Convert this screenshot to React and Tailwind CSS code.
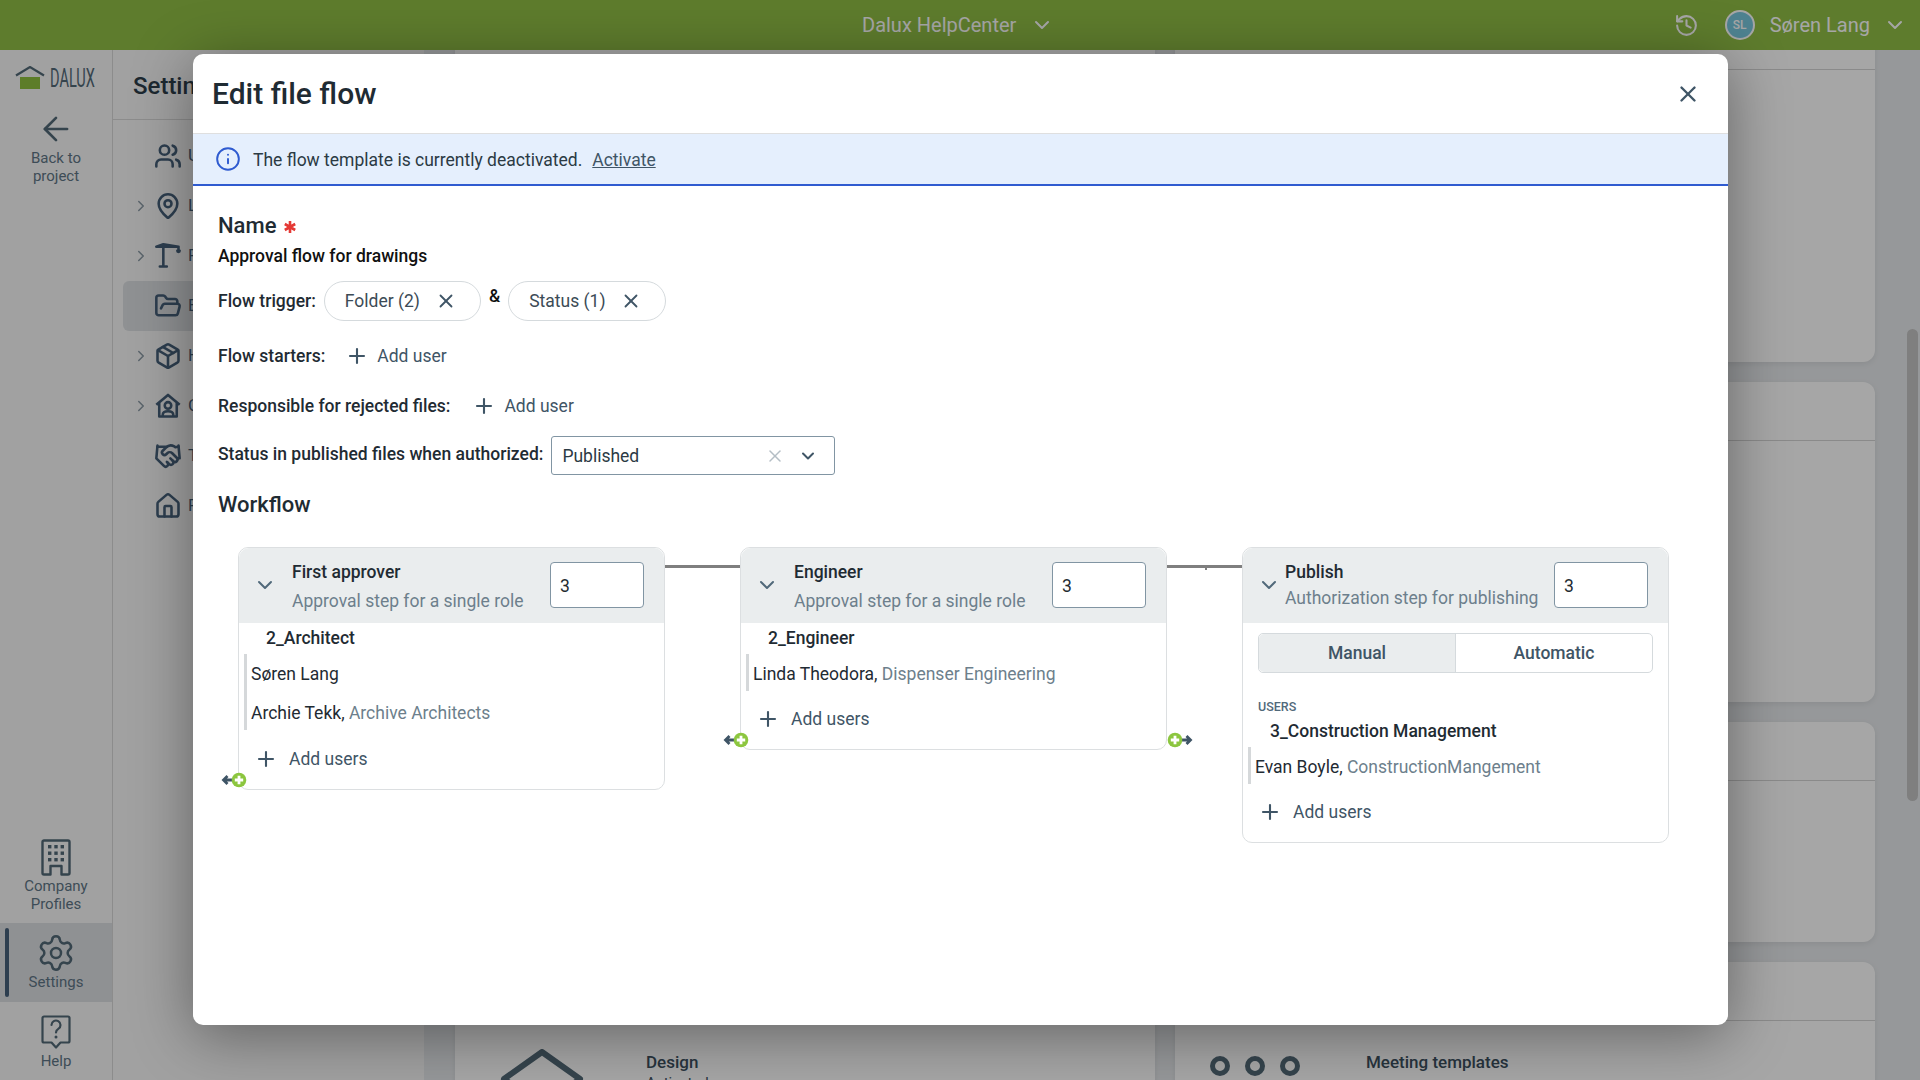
import React from "react";
import {
  ArrowLeft,
  ChevronDown,
  ChevronRight,
  FolderOpen,
  Handshake,
  History,
  House,
  Info,
  MapPin,
  Package,
  Plus,
  Settings,
  Users,
  X,
} from "lucide-react";

const sideItems = [
  { label: "Users", icon: Users },
  { label: "Locations", icon: MapPin, chevron: true },
  { label: "Project", icon: CraneIcon, chevron: true },
  { label: "Explorer", icon: FolderOpen, active: true },
  { label: "Handover", icon: Package, chevron: true },
  { label: "Company", icon: HomeUserIcon, chevron: true },
  { label: "Third party", icon: Handshake },
  { label: "Project", icon: House },
];

const steps = [
  {
    title: "First approver",
    subtitle: "Approval step for a single role",
    group: "2_Architect",
    users: [
      { name: "Søren Lang" },
      { name: "Archie Tekk", company: "Archive Architects" },
    ],
    leftAdd: true,
  },
  {
    title: "Engineer",
    subtitle: "Approval step for a single role",
    group: "2_Engineer",
    users: [{ name: "Linda Theodora", company: "Dispenser Engineering" }],
    leftAdd: true,
    rightAdd: true,
  },
  {
    title: "Publish",
    subtitle: "Authorization step for publishing",
    group: "3_Construction Management",
    users: [{ name: "Evan Boyle", company: "ConstructionMangement" }],
    publish: true,
  },
];

function CraneIcon(props) {
  return (
    <svg viewBox="0 0 24 24" fill="none" stroke="currentColor" strokeWidth="2" strokeLinecap="round" {...props}>
      <path d="M2 4h19M8 4v17M5 21h6M8 2 2 4M8 2l13 2M21 4v3" />
      <path d="M20 7.500a1 1 0 0 0 2 0" />
    </svg>
  );
}

function HomeUserIcon(props) {
  return (
    <svg viewBox="0 0 24 24" fill="none" stroke="currentColor" strokeWidth="2.200" strokeLinejoin="round" {...props}>
      <path d="M2 11 12 2.500 22 11M4.500 9v12h15V9" />
      <circle cx="12" cy="11.500" r="2.800" />
      <path d="M7.500 21v-1.500c0-2 2-3 4.500-3s4.500 1 4.500 3V21" />
    </svg>
  );
}

function BuildingIcon(props) {
  return (
    <svg viewBox="0 0 30 37" fill="none" {...props}>
      <path d="M9.500 35.500H3a1.500 1.500 0 0 1-1.500-1.500V3A1.500 1.500 0 0 1 3 1.500h24A1.500 1.500 0 0 1 28.500 3v31a1.500 1.500 0 0 1-1.500 1.500h-6.500V27h-11z" stroke="currentColor" strokeWidth="2.400" strokeLinejoin="round" />
      <g fill="currentColor">
        <rect x="7" y="6" width="3.400" height="3.400" />
        <rect x="13.300" y="6" width="3.400" height="3.400" />
        <rect x="19.600" y="6" width="3.400" height="3.400" />
        <rect x="7" y="12.500" width="3.400" height="3.400" />
        <rect x="13.300" y="12.500" width="3.400" height="3.400" />
        <rect x="19.600" y="12.500" width="3.400" height="3.400" />
        <rect x="7" y="19" width="3.400" height="3.400" />
        <rect x="13.300" y="19" width="3.400" height="3.400" />
        <rect x="19.600" y="19" width="3.400" height="3.400" />
      </g>
    </svg>
  );
}

function HelpIcon(props) {
  return (
    <svg viewBox="0 0 30 34" fill="none" {...props}>
      <path d="M3 1.500h24A1.500 1.500 0 0 1 28.500 3v23a1.500 1.500 0 0 1-1.500 1.500h-7.500L15 32.500l-4.500-5H3A1.500 1.500 0 0 1 1.500 26V3A1.500 1.500 0 0 1 3 1.500z" stroke="currentColor" strokeWidth="2.200" strokeLinejoin="round" />
      <path d="M10.500 10a4.500 4.500 0 1 1 6.800 3.900c-1.500.9-2.300 1.800-2.300 3.600" stroke="currentColor" strokeWidth="2.200" strokeLinecap="round" />
      <circle cx="15" cy="22" r="1.500" fill="currentColor" />
    </svg>
  );
}

function DaluxLogo() {
  return (
    <div className="flex items-center h-6">
      <svg viewBox="0 0 30 24" className="w-[30px] h-6 shrink-0">
        <path d="M1 9.500 15 1l14 8.500" fill="none" stroke="#526977" strokeWidth="2.200" />
        <rect x="5" y="11" width="20" height="12" fill="#8fc03f" />
      </svg>
      <span className="ml-[5px] text-[26px] leading-6 text-[#526977] inline-block w-[47px] origin-left scale-x-[0.56]">
        DALUX
      </span>
    </div>
  );
}

function RailItem({ icon, label, active }) {
  return (
    <div
      className={`relative flex flex-col items-center text-center text-[15px] leading-[18px] text-[#5f7686] ${
        active ? "bg-[#dcdfe2]" : ""
      }`}
    >
      {active && (
        <div className="absolute left-[5px] top-[5px] bottom-[5px] w-[4px] rounded-full bg-[#45607a]" />
      )}
      {icon}
      {label}
    </div>
  );
}

function Rail() {
  return (
    <aside className="w-[113px] shrink-0 border-r border-[#d7d7d7] bg-[#f7f7f7] flex flex-col justify-between">
      <div className="flex flex-col items-center">
        <div className="mt-[16px]">
          <DaluxLogo />
        </div>
        <ArrowLeft className="mt-[20px] w-[38px] h-[38px] text-[#526977]" strokeWidth={1.7} />
        <div className="mt-[1px] text-center text-[15px] leading-[18px] text-[#5f7686]">
          Back to
          <br />
          project
        </div>
      </div>
      <div>
        <div className="h-[88px] pt-[4px]">
          <RailItem
            icon={<BuildingIcon className="w-[30px] h-[37px] text-[#526977]" />}
            label={
              <div className="mt-[1px]">
                Company
                <br />
                Profiles
              </div>
            }
          />
        </div>
        <div className="h-[79px]">
          <RailItem
            active
            icon={
              <div className="h-[79px] pt-[10px] flex flex-col items-center">
                <Settings className="w-[40px] h-[40px] text-[#526977]" strokeWidth={1.5} />
                <div>Settings</div>
              </div>
            }
          />
        </div>
        <div className="h-[78px] pt-[13px]">
          <RailItem
            icon={<HelpIcon className="w-[30px] h-[34px] text-[#526977]" />}
            label={<div className="mt-[3px]">Help</div>}
          />
        </div>
      </div>
    </aside>
  );
}

function SettingsNav() {
  return (
    <nav className="w-[311px] shrink-0 bg-[#f7f7f7]">
      <div className="h-[70px] flex items-center pl-[20px] pt-[2px] border-b border-[#d7d7d7] text-[24px] font-medium text-[#2d3e4b]">
        Settings
      </div>
      <div className="mt-[11px] ml-[10px] mr-[10px]">
        {sideItems.map((item, i) => {
          const Icon = item.icon;
          return (
            <div
              key={i}
              className={`h-[50px] flex items-center rounded-md text-[17px] text-[#45607a] ${
                item.active ? "bg-[#dcdfe2]" : ""
              }`}
            >
              <div className="w-[28px] pl-[9px] shrink-0">
                {item.chevron && <ChevronRight className="w-[18px] h-[18px] text-[#8b9aa5]" strokeWidth={2} />}
              </div>
              <Icon className="w-[28px] h-[28px] ml-[3px] shrink-0" strokeWidth={2.2} />
              <span className="ml-[6px]">{item.label}</span>
            </div>
          );
        })}
      </div>
    </nav>
  );
}

function BgCard({ className, children }) {
  return (
    <div className={`rounded-[12px] bg-white shadow-[0_2px_6px_rgba(0,0,0,0.08)] ${className}`}>
      <div className="h-[59px] border-b border-[#d5d5d5]" />
      {children}
    </div>
  );
}

function Background() {
  return (
    <main className="flex-1 overflow-hidden bg-[#e7eaed] relative">
      <div className="-mt-[39px] pl-[31px] pr-[45px] grid grid-cols-[700px_700px] gap-x-5 gap-y-5">
        <BgCard className="h-[351px]" />
        <BgCard className="h-[351px]" />
        <BgCard className="h-[320px]" />
        <BgCard className="h-[320px]" />
        <BgCard className="h-[220px]" />
        <BgCard className="h-[220px]" />
        <BgCard className="h-[240px]">
          <div className="flex pt-[29px]">
            <svg viewBox="0 0 84 84" className="ml-[45px] -mt-[1px] w-[84px] h-[84px] shrink-0" fill="none" stroke="#526977" strokeWidth="6" strokeLinejoin="round">
              <path d="M42 3 80 30 42 57 4 30z" />
            </svg>
            <div className="ml-[62px] text-[17px] leading-6 font-medium text-[#3c5060]">
              Design
              <div className="-mt-[3px] font-normal text-[15px]">Activated</div>
            </div>
          </div>
        </BgCard>
        <BgCard className="h-[240px]">
          <div className="flex pt-[29px]">
            <div className="ml-[35px] mt-[6px] flex gap-[15px] h-5">
              <div className="w-5 h-5 rounded-full border-[5px] border-[#526977]" />
              <div className="w-5 h-5 rounded-full border-[5px] border-[#526977]" />
              <div className="w-5 h-5 rounded-full border-[5px] border-[#526977]" />
            </div>
            <div className="ml-[66px] text-[17px] leading-6 font-medium text-[#3c5060]">Meeting templates</div>
          </div>
        </BgCard>
      </div>
      <div className="absolute right-[2px] top-[279px] h-[472px] w-[11px] rounded-full bg-[#c3c3c3]" />
    </main>
  );
}

function TopBar() {
  return (
    <header className="relative h-[50px] shrink-0 bg-[#91bf45] flex items-center justify-end text-white">
      <div className="absolute left-[862px] top-0 h-[50px] flex items-center text-[20px]">
        Dalux HelpCenter
        <ChevronDown className="ml-[14px] w-[24px] h-[24px]" strokeWidth={2} />
      </div>
      <History className="w-[25px] h-[25px] mr-[26px]" strokeWidth={2} />
      <div className="w-[30px] h-[30px] rounded-full border-2 border-white bg-[#79c8dd] flex items-center justify-center text-[12px] font-medium">
        SL
      </div>
      <span className="ml-[15px] text-[20px]">Søren Lang</span>
      <ChevronDown className="ml-[13px] mr-[13px] w-[24px] h-[24px]" strokeWidth={2} />
    </header>
  );
}

function Chip({ label }) {
  return (
    <div className="h-10 rounded-full border border-[#d5dadd] flex items-center pl-[20px] pr-[23px] text-[#3c4b56]">
      {label}
      <X className="ml-[15px] w-[22px] h-[22px] text-[#3f5566]" strokeWidth={2} />
    </div>
  );
}

function AddLink({ label, className = "" }) {
  return (
    <div className={`flex items-center text-[#3f5566] ${className}`}>
      <Plus className="w-[24px] h-[24px]" strokeWidth={2.1} />
      <span className="ml-[8px]">{label}</span>
    </div>
  );
}

function FlowAdd({ direction, className }) {
  const left = direction === "left";
  return (
    <svg viewBox="0 0 26 16" className={`absolute w-[26px] h-[16px] ${className}`}>
      <g transform={left ? "" : "translate(26,0) scale(-1,1)"}>
        <path d="M11 8H2.500M6.500 4 2.500 8 6.500 12" fill="none" stroke="#3f5566" strokeWidth="2.800" />
        <circle cx="18" cy="8" r="7.300" fill="#8cc63f" />
        <path d="M18 3.800v8.400M13.800 8h8.400" stroke="#fff" strokeWidth="2.800" />
      </g>
    </svg>
  );
}

function RequiredMark() {
  return (
    <svg viewBox="0 0 12 12" className="ml-[8px] mt-[4px] w-[12px] h-[12px]" stroke="#e53935" strokeWidth="2.600">
      <path d="M6 0v12M.8 3l10.400 6M.8 9l10.400-6" />
    </svg>
  );
}

function StepCard({ step }) {
  const single = step.users.length === 1;
  return (
    <div className="relative w-[427px] shrink-0 rounded-[10px] border border-[#dcdfe1] bg-white">
      <div className="h-[75px] rounded-t-[10px] bg-[#eaedee] flex pr-[20px]">
        <ChevronDown className="ml-[14px] mt-[25px] w-[24px] h-[24px] shrink-0 text-[#51697a]" strokeWidth={2} />
        <div className={`pt-[12px] ${step.publish ? "ml-[4px]" : "ml-[15px]"}`}>
          <div className="h-6 leading-6 font-medium text-[#1f2b33]">{step.title}</div>
          <div className={`h-6 leading-6 text-[#6d7f8c] ${step.publish ? "mt-[2px]" : "mt-[5px]"}`}>
            {step.subtitle}
          </div>
        </div>
        <div className="ml-auto mt-[14px] w-[94px] h-[46px] rounded-[4px] border border-[#8195a3] bg-white flex items-center pl-[9px] pt-[2px] text-[#1f2b33]">
          3
        </div>
      </div>
      <div className="pb-[15px]">
        {step.publish ? (
          <div>
            <div className="mt-[10px] ml-[15px] w-[395px] h-10 rounded-[5px] border border-[#d5dadd] flex font-medium text-[#3f5566]">
              <div className="w-[197px] rounded-l-[5px] bg-[#eaedee] border-r border-[#d5dadd] flex items-center justify-center">Manual</div>
              <div className="flex-1 flex items-center justify-center">Automatic</div>
            </div>
            <div className="mt-[26px] ml-[15px] h-4 leading-4 text-[12.5px] font-medium text-[#51697a]">USERS</div>
          </div>
        ) : null}
        <div className={`h-6 leading-6 pl-[27px] font-medium text-[#1f2b33] ${step.publish ? "mt-[4px]" : "mt-[3px]"}`}>
          {step.group}
        </div>
        <div className="mt-[4px] ml-[5px] border-l-[3px] border-[#d5d8da] pl-[4px] flex flex-col gap-y-[2px]">
          {step.users.map((user) => (
            <div key={user.name} className="h-[37px] pt-[3px] flex items-center text-[#1f2b33] whitespace-pre">
              {user.name}
              {user.company && (
                <>
                  {", "}
                  <span className="text-[#6d7f8c]">{user.company}</span>
                </>
              )}
            </div>
          ))}
        </div>
        <AddLink
          label="Add users"
          className={`h-[30px] ml-[15px] text-[#1f2b33] [&>svg]:text-[#3f5566] [&>span]:ml-[11px] ${
            single ? "mt-[13px]" : "mt-[14px]"
          }`}
        />
      </div>
      {step.leftAdd && <FlowAdd direction="left" className="left-[-18px] bottom-[1px]" />}
      {step.rightAdd && <FlowAdd direction="right" className="right-[-27px] bottom-[1px]" />}
    </div>
  );
}

function Connector({ tick }) {
  return (
    <div className="relative w-[75px] h-[3px] mt-[18px] shrink-0 bg-[#7f7f7f]">
      {tick && <div className="absolute left-[38px] top-[3px] w-[2px] h-[2px] bg-[#7f7f7f]" />}
    </div>
  );
}

function EditFlowDialog() {
  return (
    <div className="absolute left-[193px] top-[54px] w-[1535px] h-[971px] rounded-[10px] bg-white shadow-[0_10px_60px_rgba(0,0,0,0.4)] text-[17.5px] overflow-hidden">
      <div className="h-[80px] border-b border-[#dfdfdf] flex items-center justify-between pl-[19px] pr-[27px]">
        <h1 className="text-[30px] font-medium text-[#1f2b33]">Edit file flow</h1>
        <X className="w-[26px] h-[26px] text-[#3f5566]" strokeWidth={2.200} />
      </div>
      <div className="h-[52px] bg-[#e5effd] border-b-2 border-[#2f5bd0] flex items-center pl-[22px] text-[#2b3a44]">
        <Info className="w-[26px] h-[26px] text-[#2f5bd0]" strokeWidth={1.800} />
        <span className="ml-[12px] mt-[2px]">The flow template is currently deactivated.</span>
        <span className="ml-[10px] mt-[2px] underline text-[#3f5566]">Activate</span>
      </div>

      <div className="pl-[25px] pt-[24px]">
        <div className="h-[30px] flex items-center text-[22px] font-medium text-[#1f2b33]">
          Name
          <RequiredMark />
        </div>
        <div className="mt-[4px] h-6 leading-6 font-medium text-[#111]">Approval flow for drawings</div>

        <div className="mt-[13px] h-10 flex items-center">
          <span className="font-medium text-[#1f2b33]">Flow trigger:</span>
          <div className="ml-[8px]">
            <Chip label="Folder (2)" />
          </div>
          <span className="mx-[8px] -mt-[9px] font-medium text-[#111]">&amp;</span>
          <Chip label="Status (1)" />
        </div>

        <div className="mt-[23px] h-6 flex items-center">
          <span className="font-medium text-[#1f2b33]">Flow starters:</span>
          <AddLink label="Add user" className="ml-[20px]" />
        </div>

        <div className="mt-[26px] h-6 flex items-center">
          <span className="font-medium text-[#1f2b33]">Responsible for rejected files:</span>
          <AddLink label="Add user" className="ml-[22px]" />
        </div>

        <div className="mt-[18px] flex items-center">
          <span className="font-medium text-[#1f2b33] -mt-[3px]">Status in published files when authorized:</span>
          <div className="ml-[8px] w-[284px] h-[39px] rounded-[3px] border border-[#8195a3] flex items-center pl-[10px] pr-[16px] pt-[1px] text-[#2b3a44]">
            Published
            <X className="ml-auto w-[20px] h-[20px] text-[#b4bec5]" strokeWidth={1.800} />
            <ChevronDown className="ml-[13px] w-[20px] h-[20px] text-[#3f5566]" strokeWidth={2.400} />
          </div>
        </div>

        <h2 className="mt-[14px] h-[30px] flex items-center text-[22px] font-medium text-[#1f2b33]">Workflow</h2>

        <div className="mt-[28px] ml-[20px] flex items-start">
          <StepCard step={steps[0]} />
          <Connector />
          <StepCard step={steps[1]} />
          <Connector tick />
          <StepCard step={steps[2]} />
        </div>
      </div>
    </div>
  );
}

export default function App() {
  return (
    <div className="relative h-screen overflow-hidden font-['Roboto',sans-serif]">
      <div className="h-full flex flex-col">
        <TopBar />
        <div className="flex-1 min-h-0 flex">
          <Rail />
          <SettingsNav />
          <Background />
        </div>
      </div>
      <div className="absolute inset-0 bg-black/35" />
      <EditFlowDialog />
    </div>
  );
}
